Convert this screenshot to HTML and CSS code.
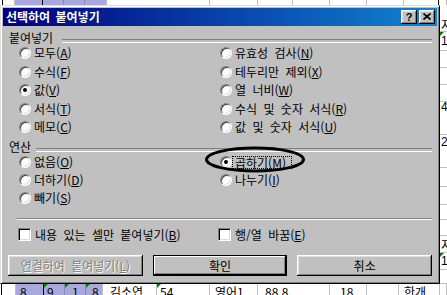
FILE: index.html
```html
<!DOCTYPE html>
<html lang="ko">
<head>
<meta charset="utf-8">
<title>선택하여 붙여넣기</title>
<link rel="stylesheet" href="styles.css">
</head>
<body>
<div class="screen">
  <div class="sheet">
    <div class="sheet-top">
      <span class="dk"></span><span></span><span class="lav dk"></span><span class="lav ln"></span><span class="lav ln"></span><span class="lav"></span><span></span><span></span><span></span><span></span><span></span><span></span><span class="dk"></span><span></span>
    </div>
    <div class="sheet-mid">
      <div class="mid-fill"></div>
      <div class="sheet-right">
        <div class="p14">지</div>
        <div class="p3 tri">1</div>
        <div></div>
        <div></div>
        <div></div>
        <div class="tight">4</div>
        <div class="p1">2</div>
        <div></div>
        <div></div>
        <div></div>
        <div></div>
        <div class="p3">지</div>
        <div class="p2 tri">1</div>
        <div></div>
      </div>
    </div>
    <div class="sheet-bottom">
      <span class="dk"></span><span></span><span class="lav dk pl4">8</span><span class="lav ln tri pl3">9</span><span class="lav ln tri pl7">1</span><span class="lav tri pl6">8</span><span class="pl7">김소연</span><span class="tri pl3">54</span><span class="pl5">영어1</span><span class="pl7">88.8</span><span class="pl10">18</span><span></span><span class="pl5">한개</span><span></span>
    </div>
  </div>

  <div class="dialog">
    <div class="titlebar">
      <span class="title">선택하여 붙여넣기</span>
      <span class="tbtn help">?</span>
      <span class="tbtn close"><svg width="8" height="7" viewBox="0 0 8 7"><path d="M0.5 0.5 L7.5 6.5 M7.5 0.5 L0.5 6.5" stroke="#000" stroke-width="1.7" fill="none"/></svg></span>
    </div>
    <div class="content">
      <div class="group-head g1">붙여넣기</div>
      <div class="radios paste">
        <label class="opt"><span class="radio"></span><span>모두(<u>A</u>)</span></label>
        <label class="opt"><span class="radio"></span><span>유효성 검사(<u>N</u>)</span></label>
        <label class="opt"><span class="radio"></span><span>수식(<u>F</u>)</span></label>
        <label class="opt"><span class="radio"></span><span>테두리만 제외(<u>X</u>)</span></label>
        <label class="opt"><span class="radio on"></span><span>값(<u>V</u>)</span></label>
        <label class="opt"><span class="radio"></span><span>열 너비(<u>W</u>)</span></label>
        <label class="opt"><span class="radio"></span><span>서식(<u>T</u>)</span></label>
        <label class="opt"><span class="radio"></span><span>수식 및 숫자 서식(<u>R</u>)</span></label>
        <label class="opt"><span class="radio"></span><span>메모(<u>C</u>)</span></label>
        <label class="opt"><span class="radio"></span><span>값 및 숫자 서식(<u>U</u>)</span></label>
      </div>
      <div class="group-head g2">연산</div>
      <div class="radios ops">
        <label class="opt"><span class="radio"></span><span>없음(<u>O</u>)</span></label>
        <label class="opt"><span class="radio on"></span><span class="focus">곱하기(<u>M</u>)</span></label>
        <label class="opt"><span class="radio"></span><span>더하기(<u>D</u>)</span></label>
        <label class="opt"><span class="radio"></span><span>나누기(<u>I</u>)</span></label>
        <label class="opt"><span class="radio"></span><span>빼기(<u>S</u>)</span></label>
      </div>
      <div class="sep"></div>
      <div class="checks">
        <label class="opt chk"><span class="check"></span><span>내용 있는 셀만 붙여넣기(<u>B</u>)</span></label>
        <label class="opt chk"><span class="check"></span><span>행/열 바꿈(<u>E</u>)</span></label>
      </div>
      <div class="buttons">
        <span class="btn disabled">연결하여 붙여넣기(<u>L</u>)</span>
        <span class="btn default">확인</span>
        <span class="btn">취소</span>
      </div>
    </div>
  </div>

  <svg class="annot" width="447" height="295" viewBox="0 0 447 295">
    <ellipse cx="255" cy="159.5" rx="48.5" ry="11.5" fill="none" stroke="#000" stroke-width="3"/>
  </svg>
</div>
</body>
</html>
```

FILE: styles.css
```css
* { box-sizing: border-box; }
html, body { margin: 0; padding: 0; }
body {
  font-family: "Noto Sans CJK KR", "Noto Sans", sans-serif;
  font-size: 12px;
  line-height: 12px;
  color: #000;
}
.screen {
  position: relative;
  width: 447px;
  height: 295px;
  overflow: hidden;
  background: #fff;
}

/* background spreadsheet */
.sheet { display: flex; flex-direction: column; height: 295px; }
.sheet-top {
  display: grid;
  grid-template-columns: 3px 12px 28px 21px 21px 22px 103px 48px 35px 37px 37px 37px 35px 8px;
  height: 5px;
}
.sheet-top > span { border-right: 1px solid #c0c0c0; }
.sheet-top > .dk, .sheet-bottom > .dk { border-right-color: #000; }
.sheet-top > .ln, .sheet-bottom > .ln { border-right-color: #8888c0; }
.lav { background: #a8a8dc; }
.sheet-mid { display: flex; height: 279px; }
.mid-fill { width: 440px; }
.sheet-right {
  width: 7px;
  display: grid;
  grid-template-rows: 27px 19px 17px 17px 17px 33px 33px 19px 18px 15px 16px 17px 17px 14px;
}
.sheet-right > div {
  border-bottom: 1px solid #c0c0c0;
  padding-left: 1px;
  white-space: nowrap;
  position: relative;
  font-family: "Liberation Sans", "Noto Sans CJK KR", sans-serif;
}
.sheet-right > .p14 { padding-top: 14px; font-family: "Noto Sans CJK KR", sans-serif; }
.sheet-right > .p3 { padding-top: 3px; }
.sheet-right > .p2 { padding-top: 2px; }
.sheet-right > .p1 { padding-top: 1px; }
.sheet-right > .tight { line-height: 10px; }
.sheet-right > .p3:not(.tri) { font-family: "Noto Sans CJK KR", sans-serif; }
.sheet-bottom {
  display: grid;
  grid-template-columns: 2px 14px 28px 21px 21px 17px 54px 53px 48px 72px 37px 32px 41px 7px;
  height: 11px;
}
.sheet-bottom > span {
  border-right: 1px solid #c0c0c0;
  padding-top: 2px;
  white-space: nowrap;
  overflow: hidden;
  position: relative;
}
.pl3 { padding-left: 3px; }
.pl4 { padding-left: 4px; }
.pl5 { padding-left: 5px; }
.pl6 { padding-left: 6px; }
.pl7 { padding-left: 7px; }
.pl10 { padding-left: 10px; }
.tri::before {
  content: "";
  position: absolute;
  left: 0;
  top: 0;
  border-top: 4px solid #008000;
  border-right: 4px solid transparent;
}

/* dialog window */
.dialog {
  position: absolute;
  left: 0;
  top: 5px;
  width: 440px;
  height: 279px;
  background: #c0c0c0;
  border: 1px solid;
  border-color: #dfdfdf #000 #000 #dfdfdf;
  box-shadow: inset 1px 1px #fff, inset -1px -1px #808080;
  padding: 2px;
  display: flex;
  flex-direction: column;
}
.titlebar {
  height: 18px;
  flex: none;
  background: linear-gradient(to right, #000080, #1084d0);
  display: flex;
  align-items: center;
  gap: 2px;
  padding: 0 2px 0 3px;
  color: #fff;
  font-weight: bold;
  word-spacing: 2px;
}
.title { flex: 1; white-space: nowrap; }
.tbtn {
  width: 16px;
  height: 14px;
  flex: none;
  background: #c0c0c0;
  box-shadow: inset -1px -1px #000, inset 1px 1px #fff, inset -2px -2px #808080, inset 2px 2px #dfdfdf;
  display: flex;
  align-items: center;
  justify-content: center;
  color: #000;
}
.help {
  font-family: "Liberation Sans", sans-serif;
  font-weight: bold;
  font-size: 11px;
  padding-bottom: 1px;
}
.close svg { display: block; margin-bottom: 1px; }

.content { padding: 6px 5px 0 5px; word-spacing: 3px; }
.group-head {
  display: flex;
  height: 12px;
  padding-left: 1px;
  white-space: nowrap;
}
.group-head::after {
  content: "";
  flex: 1;
  height: 2px;
  margin-top: 7px;
  border-top: 1px solid #808080;
  border-bottom: 1px solid #fff;
}
.g1::after { margin-left: 9px; }
.g2 { margin-top: 4.5px; }
.g2::after { margin-left: 5px; }

.radios {
  display: grid;
  grid-template-columns: 201px 1fr;
  grid-auto-rows: 18.5px;
  padding-left: 11px;
}
.radios.ops { grid-auto-rows: 18px; }
.opt {
  display: flex;
  align-items: center;
  gap: 3px;
  white-space: nowrap;
}
.radio {
  width: 12px;
  height: 12px;
  flex: none;
  border-radius: 50%;
  background: #fff;
  border: 1px solid;
  border-color: #808080 #fff #fff #808080;
  box-shadow: inset 1px 1px #404040, inset -1px -1px #dfdfdf;
  position: relative;
}
.radio.on::after {
  content: "";
  position: absolute;
  left: 3px;
  top: 3px;
  width: 4px;
  height: 4px;
  border-radius: 50%;
  background: #000;
}
.focus {
  border: 1px dotted #000;
  padding: 0 5px 0 2px;
  margin-left: -3px;
  line-height: 11px;
}
u { text-underline-offset: 1px; }

.sep {
  margin: 11px 0 0 9px;
  height: 2px;
  border-top: 1px solid #808080;
  border-bottom: 1px solid #fff;
}
.checks {
  display: grid;
  grid-template-columns: 200px 1fr;
  margin-top: 8px;
  padding-left: 10px;
  height: 13px;
}
.chk { gap: 4px; }
.check {
  width: 13px;
  height: 13px;
  flex: none;
  background: #fff;
  border: 1px solid;
  border-color: #808080 #fff #fff #808080;
  box-shadow: inset 1px 1px #000, inset -1px -1px #dfdfdf;
}
.buttons {
  display: grid;
  grid-template-columns: repeat(3, 1fr);
  gap: 10px;
  margin-top: 14px;
}
.btn {
  height: 21px;
  display: flex;
  align-items: center;
  justify-content: center;
  background: #c0c0c0;
  white-space: nowrap;
  box-shadow: inset -1px -1px #000, inset 1px 1px #fff, inset -2px -2px #808080, inset 2px 2px #dfdfdf;
}
.btn.default {
  border: 1px solid #000;
  box-shadow: inset -1px -1px #000, inset 1px 1px #fff, inset -2px -2px #808080;
}
.btn.disabled {
  color: #808080;
  text-shadow: 1px 1px #fff;
}

.annot {
  position: absolute;
  left: 0;
  top: 0;
  pointer-events: none;
}
```
